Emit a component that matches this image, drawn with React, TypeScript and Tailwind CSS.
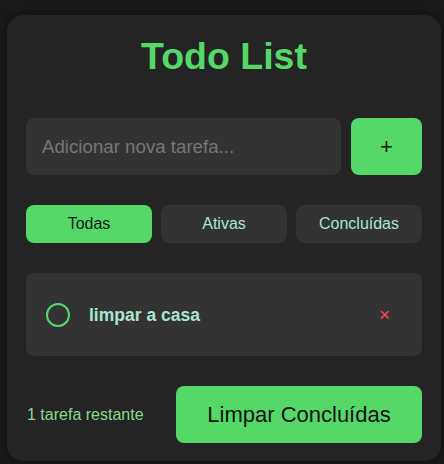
import { useState } from 'react';

type Filter = 'all' | 'active' | 'done';

interface Todo {
  id: number;
  text: string;
  done: boolean;
}

const FILTERS: { key: Filter; label: string }[] = [
  { key: 'all', label: 'Todas' },
  { key: 'active', label: 'Ativas' },
  { key: 'done', label: 'Concluídas' },
];

export default function App() {
  const [todos, setTodos] = useState<Todo[]>([{ id: 1, text: 'limpar a casa', done: false }]);
  const [input, setInput] = useState('');
  const [filter, setFilter] = useState<Filter>('all');

  const addTodo = () => {
    const t = input.trim();
    if (!t) return;
    setTodos((prev) => [...prev, { id: Date.now(), text: t, done: false }]);
    setInput('');
  };

  const visible = todos.filter((t) =>
    filter === 'all' ? true : filter === 'active' ? !t.done : t.done
  );
  const remaining = todos.filter((t) => !t.done).length;

  return (
    <div className="min-h-[464px] bg-[#1a1a1a] pt-[15px] font-['Liberation_Sans',Arial,sans-serif]">
      <div className="ml-[7px] w-[434px] rounded-2xl bg-[#242424] px-[19px] pt-[20px] pb-[18px] shadow-[0_0_12px_rgba(0,0,0,0.5)]">
        <h1 className="mb-[40px] text-center text-[37.5px] font-bold leading-[1.15] text-[#54d968]">
          Todo List
        </h1>

        {/* Add form */}
        <div className="flex gap-[10px]">
          <input
            value={input}
            onChange={(e) => setInput(e.target.value)}
            onKeyDown={(e) => e.key === 'Enter' && addTodo()}
            placeholder="Adicionar nova tarefa..."
            className="h-[57px] flex-1 rounded-lg bg-[#333333] px-4 text-[18.7px] text-[#dddddd] placeholder-[#777777] outline-none"
          />
          <button
            onClick={addTodo}
            className="flex h-[57px] w-[71px] items-center justify-center rounded-lg bg-[#54d968] text-[22px] text-[#111111]"
          >
            +
          </button>
        </div>

        {/* Filters */}
        <div className="mt-[30px] grid grid-cols-3 gap-[9px]">
          {FILTERS.map((f) => (
            <button
              key={f.key}
              onClick={() => setFilter(f.key)}
              className={`h-[38px] rounded-lg text-[16px] ${
                filter === f.key ? 'bg-[#54d968] text-[#1a1a1a]' : 'bg-[#333333] text-[#a8e6cf]'
              }`}
            >
              {f.label}
            </button>
          ))}
        </div>

        {/* List */}
        <div className="mt-[30px] flex flex-col gap-3">
          {visible.map((t) => (
            <div key={t.id} className="flex h-[83px] items-center rounded-lg bg-[#333333] pl-[20px] pr-[28px]">
              <button
                onClick={() =>
                  setTodos((prev) => prev.map((x) => (x.id === t.id ? { ...x, done: !x.done } : x)))
                }
                className={`h-[24px] w-[24px] rounded-full border-2 border-[#54d968] ${t.done ? 'bg-[#54d968]' : ''}`}
              />
              <span
                className={`ml-[19px] flex-1 text-[17.5px] font-bold text-[#a8e6cf] ${t.done ? 'line-through opacity-60' : ''}`}
              >
                {t.text}
              </span>
              <button
                onClick={() => setTodos((prev) => prev.filter((x) => x.id !== t.id))}
                className="px-1 text-[19px] leading-none text-[#ff4757]"
              >
                ×
              </button>
            </div>
          ))}
        </div>

        {/* Footer */}
        <div className="mt-[30px] flex items-center justify-between pl-px">
          <span className="text-[16px] text-[#88d88a]">
            {remaining} {remaining === 1 ? 'tarefa restante' : 'tarefas restantes'}
          </span>
          <button
            onClick={() => setTodos((prev) => prev.filter((x) => !x.done))}
            className="h-[57px] w-[246px] rounded-lg bg-[#54d968] text-[22px] text-[#111111]"
          >
            Limpar Concluídas
          </button>
        </div>
      </div>
    </div>
  );
}
